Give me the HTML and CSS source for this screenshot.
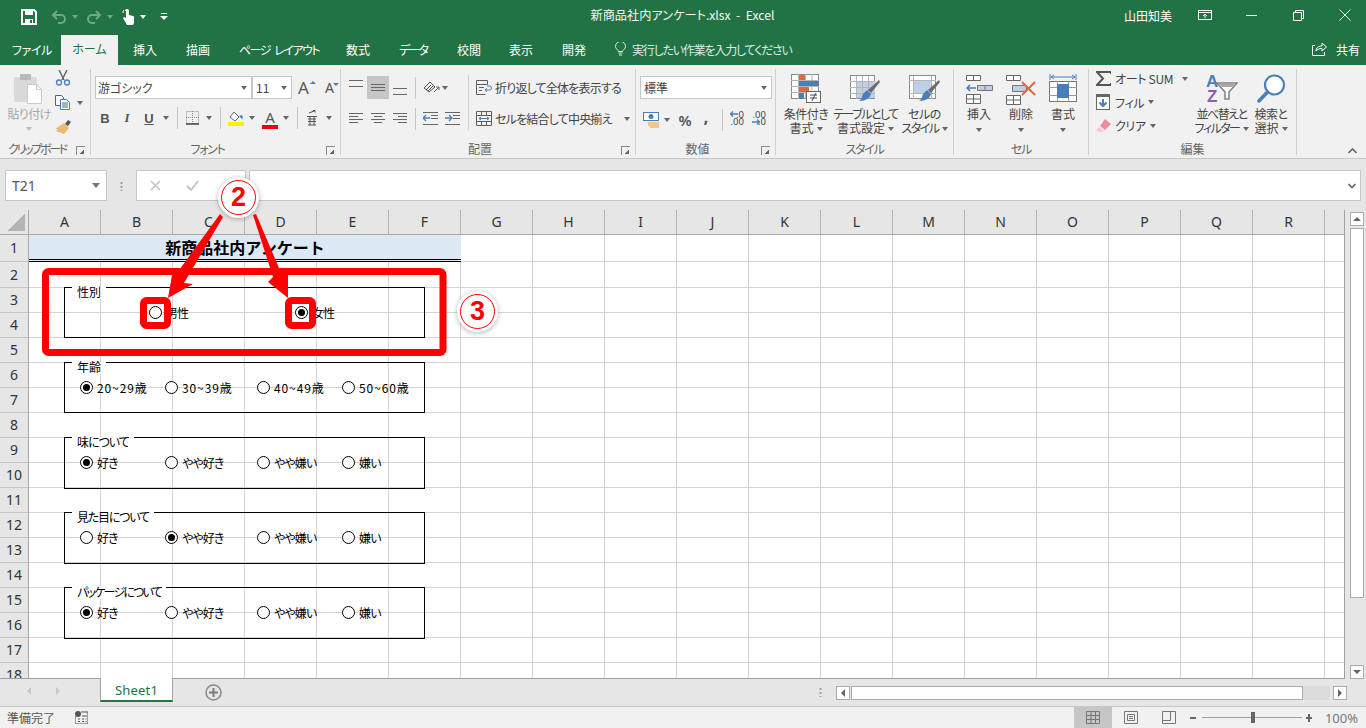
FILE: index.html
```html
<!DOCTYPE html>
<html lang="ja">
<head>
<meta charset="utf-8">
<title>新商品社内アンケート.xlsx - Excel</title>
<link rel="stylesheet" href="styles.css">
</head>
<body>
<div class="app">
  <header class="titlebar">
    <div class="qat">
      <svg class="q-save" width="16" height="16" viewBox="0 0 16 16"><path d="M1 1h12l2 2v12H1z" fill="none" stroke="#fff" stroke-width="2"/><rect x="4" y="1" width="8" height="5" fill="#fff"/><rect x="4" y="10" width="8" height="5" fill="#fff"/><rect x="9" y="11" width="2" height="3" fill="#217346"/></svg>
      <svg class="q-undo" width="16" height="14" viewBox="0 0 16 14"><path d="M6 1L2 5l4 4M2 5h8a4 4 0 0 1 0 8H7" fill="none" stroke="#6fa78b" stroke-width="2"/></svg>
      <span class="caret dimc"></span>
      <svg class="q-redo" width="16" height="14" viewBox="0 0 16 14"><path d="M10 1l4 4-4 4M14 5H6a4 4 0 0 0 0 8h3" fill="none" stroke="#6fa78b" stroke-width="2"/></svg>
      <span class="caret dimc"></span>
      <svg class="q-touch" width="13" height="16" viewBox="0 0 13 16"><path d="M3 2a2 2 0 0 1 4 0v4l4 1a1.500 1.500 0 0 1 1 2v5l-1 2H5L1 9l1-1 2 1V2z" fill="#fff"/><path d="M1 4a4 4 0 0 1 1-3" fill="none" stroke="#fff"/></svg>
      <span class="caret whitec"></span>
      <svg class="q-more" width="8" height="8" viewBox="0 0 8 8"><rect x="1" y="0" width="6" height="1" fill="#fff"/><path d="M0 3h8L4 7z" fill="#fff"/></svg>
    </div>
    <div class="doc-title">新商品社内アンケート.xlsx&nbsp; - &nbsp;Excel</div>
    <div class="win">
      <span class="user">山田知美</span>
      <svg class="w-ribbon" width="15" height="11" viewBox="0 0 15 11"><rect x=".5" y=".5" width="13" height="9" fill="none" stroke="#fff"/><path d="M0 2.500h14M7 8V4M5 6l2-2 2 2" fill="none" stroke="#fff"/></svg>
      <svg class="w-min" width="11" height="11" viewBox="0 0 11 11"><path d="M0 5.500h11" stroke="#fff"/></svg>
      <svg class="w-max" width="11" height="11" viewBox="0 0 11 11"><path d="M.5 2.500h8v8h-8zM2.500 2.500v-2h8v8h-2" fill="none" stroke="#fff"/></svg>
      <svg class="w-close" width="12" height="12" viewBox="0 0 12 12"><path d="M.5.500l11 11M11.500.500l-11 11" stroke="#fff"/></svg>
    </div>
  </header>

  <nav class="tabs">
    <span class="tab t-file">ファイル</span>
    <span class="tab t-home">ホーム</span>
    <span class="tab t-ins">挿入</span>
    <span class="tab t-draw">描画</span>
    <span class="tab t-page">ページ レイアウト</span>
    <span class="tab t-form">数式</span>
    <span class="tab t-data">データ</span>
    <span class="tab t-rev">校閲</span>
    <span class="tab t-view">表示</span>
    <span class="tab t-dev">開発</span>
    <svg class="bulb" width="11" height="14" viewBox="0 0 11 14"><path d="M3.500 9.500C3 7.500.5 7 .5 4.500a5 5 0 0 1 10 0C10.500 7 8 7.500 7.500 9.500zM3.500 11h4M4 13h3" fill="none" stroke="#dfeae4"/></svg>
    <span class="tell">実行したい作業を入力してください</span>
    <svg class="share" width="15" height="14" viewBox="0 0 15 14"><path d="M3 3.500H.5v10h12V10M4 9c0-3 2-5 6-5V1l4.500 4L10 9V6.500C7 6.500 5 7.500 4 9z" fill="none" stroke="#fff"/></svg>
    <span class="tab t-share">共有</span>
  </nav>

  <section class="ribbon">
    <!-- クリップボード -->
    <div class="group g-clip">
      <div class="body clip-body">
        <div class="tall paste">
          <svg class="ticon" width="32" height="32" viewBox="0 0 32 32"><rect x="1" y="4" width="23" height="25" rx="1" fill="#dcd9db"/><rect x="7" y="1" width="11" height="6" fill="#bdb9bb"/><path d="M14.500 11.500h9l5 5v14h-14z" fill="#fff" stroke="#c9c9c9"/><path d="M23.500 11.500v5h5" fill="none" stroke="#c9c9c9"/></svg>
          <span class="lbl dim">貼り付け</span>
          <span class="caret lightc"></span>
        </div>
        <div class="clip-small">
          <svg width="16" height="16" viewBox="0 0 16 16"><path d="M4 0l5 10M12 0L7 10" stroke="#666" stroke-width="1.500" fill="none"/><circle cx="4" cy="12.500" r="2.500" fill="none" stroke="#4a7eb8" stroke-width="1.300"/><circle cx="12" cy="12.500" r="2.500" fill="none" stroke="#4a7eb8" stroke-width="1.300"/></svg>
          <div class="clip-copy"><svg width="16" height="15" viewBox="0 0 16 15"><path d="M.5.500h6l2 2v8H.5z" fill="#fff" stroke="#5e5e5e"/><path d="M5.500 4.500h6l3 3v7h-9z" fill="#fff" stroke="#4a7eb8"/><path d="M7 8h6M7 10h6M7 12h6" stroke="#5e5e5e"/></svg><span class="caret"></span></div>
          <svg width="17" height="15" viewBox="0 0 17 15"><path d="M10 5l3-4 3 2-3 4z" fill="#555"/><path d="M9 4l5 5-5 6-8-3 2-2-3 0z" fill="#eab972"/></svg>
        </div>
      </div>
      <div class="glabel"><span class="gtext clip-text">クリップボード</span><span class="launch"></span></div>
    </div>

    <!-- フォント -->
    <div class="group g-font">
      <div class="body">
        <div class="font-row1">
          <div class="combo c-font"><span>游ゴシック</span><span class="caret"></span></div>
          <div class="combo c-size"><span>11</span><span class="caret"></span></div>
          <span class="fsz big">A<i class="up"></i></span>
          <span class="fsz small">A<i class="down"></i></span>
        </div>
        <div class="font-row2">
          <span class="cell fb">B</span>
          <span class="cell fi">I</span>
          <span class="cell fu">U</span>
          <span class="cell"><span class="caret"></span></span>
          <span class="cell"><span class="sep"></span></span>
          <span class="cell"><svg width="13" height="14" viewBox="0 0 13 14"><path d="M.5.500h12v12H.5z" fill="none" stroke="#8a8a8a" stroke-dasharray="1 1"/><path d="M6.500 0v13M0 6.500h13" stroke="#8a8a8a" stroke-dasharray="1 1"/><path d="M0 13h13" stroke="#444" stroke-width="1.500"/></svg></span>
          <span class="cell"><span class="caret"></span></span>
          <span class="cell"><span class="sep"></span></span>
          <span class="cell"><svg width="16" height="15" viewBox="0 0 16 15"><path d="M6 1l5 5-4 4-5-4z" fill="#fff" stroke="#666"/><path d="M11 5l3 3 1-1-1-3z" fill="#4a7eb8"/><rect y="11" width="16" height="4" fill="#ffef00"/></svg></span>
          <span class="cell"><span class="caret"></span></span>
          <span class="cell fcolor">A</span>
          <span class="cell"><span class="caret"></span></span>
          <span class="cell"><span class="sep"></span></span>
          <span class="cell"><svg width="10" height="16" viewBox="0 0 10 16"><path d="M2 3l5-2M6 .5h2v2" stroke="#444" fill="none"/><path d="M0 6.500h10M1 9h8M1 11.500h8M1 15h8M3 7v8M7 7v8" stroke="#555"/></svg></span>
          <span class="cell"><span class="caret"></span></span>
        </div>
      </div>
      <div class="glabel"><span class="gtext">フォント</span><span class="launch"></span></div>
    </div>

    <!-- 配置 -->
    <div class="group g-align">
      <div class="body align-body">
        <div class="align-left">
          <div class="align-row">
            <span class="cell al-t"><svg width="14" height="8" viewBox="0 0 14 8"><path d="M0 .500h14M0 6.500h14" stroke="#666"/></svg></span>
            <span class="cell al-on"><svg width="14" height="8" viewBox="0 0 14 8"><path d="M0 .500h14M0 3.500h14M0 6.500h14" stroke="#666"/></svg></span>
            <span class="cell al-b"><svg width="14" height="8" viewBox="0 0 14 8"><path d="M0 .500h14M0 6.500h14" stroke="#666"/></svg></span>
            <span class="cell"><span class="sep"></span></span>
            <span class="cell"><svg width="17" height="13" viewBox="0 0 17 13"><path d="M1 7l6-6 5 5-6 5zM3 9l5-5M5 10l5-5" fill="none" stroke="#555"/><path d="M11 11l5-5M16 9V6h-3" fill="none" stroke="#666"/></svg></span>
            <span class="cell"><span class="caret"></span></span>
          </div>
          <div class="align-row">
            <span class="cell"><svg width="14" height="12" viewBox="0 0 14 12"><path d="M0 .500h14M0 3.500h9M0 6.500h14M0 9.500h9" stroke="#666"/></svg></span>
            <span class="cell"><svg width="14" height="12" viewBox="0 0 14 12"><path d="M0 .500h14M3 3.500h8M0 6.500h14M3 9.500h8" stroke="#666"/></svg></span>
            <span class="cell"><svg width="14" height="12" viewBox="0 0 14 12"><path d="M0 .500h14M5 3.500h9M0 6.500h14M5 9.500h9" stroke="#666"/></svg></span>
            <span class="cell"><span class="sep"></span></span>
            <span class="cell ind"><svg width="15" height="13" viewBox="0 0 15 13"><path d="M0 .500h15M8 3.500h7M8 6.500h7M0 12.500h15" stroke="#666"/><path d="M0 6h7M3 3L0 6l3 3" fill="none" stroke="#4a7eb8" stroke-width="1.300"/></svg><svg width="15" height="13" viewBox="0 0 15 13"><path d="M0 .500h15M8 3.500h7M8 6.500h7M0 12.500h15" stroke="#666"/><path d="M0 6h7M4 3l3 3-3 3" fill="none" stroke="#4a7eb8" stroke-width="1.300"/></svg></span>
          </div>
        </div>
        <div class="align-right">
          <div class="wide-btn"><svg width="16" height="15" viewBox="0 0 16 15"><path d="M.5.500h11v4H.500zM.5 4.500v10h9M3 7.500h5M3 10.500h3" fill="none" stroke="#5e5e5e"/><path d="M9 10h4.500a1.500 1.500 0 0 0 0-4H11M11 8.500L9 10l2 1.500" fill="none" stroke="#4a7eb8"/></svg><span>折り返して全体を表示する</span></div>
          <div class="wide-btn"><svg width="16" height="15" viewBox="0 0 16 15"><path d="M.5.500h15v14H.500zM0 4.500h16M0 10.500h16M5.500.500v4M10.500.500v4M5.500 10.500v4M10.500 10.500v4" fill="none" stroke="#5e5e5e"/><path d="M3 7.500h10M5 6L3 7.500 5 9M11 6l2 1.500L11 9" fill="none" stroke="#4a7eb8"/></svg><span>セルを結合して中央揃え</span><span class="caret merge-caret"></span></div>
        </div>
      </div>
      <div class="glabel"><span class="gtext kj">配置</span><span class="launch"></span></div>
    </div>

    <!-- 数値 -->
    <div class="group g-num">
      <div class="body">
        <div class="combo c-num"><span>標準</span><span class="caret"></span></div>
        <div class="num-row">
          <span class="cell"><svg width="17" height="16" viewBox="0 0 17 16"><rect x=".5" y=".5" width="15" height="8" fill="#fff" stroke="#4a7eb8"/><circle cx="8" cy="4.500" r="2.500" fill="#4a7eb8"/><path d="M5 11h11M5 13h11M7 15h9" stroke="#eab972" stroke-width="1.500"/></svg></span>
          <span class="cell"><span class="caret"></span></span>
          <span class="cell pct">%</span>
          <span class="cell cma">,</span>
          <span class="cell"><span class="sep"></span></span>
          <span class="cell dec"><svg class="dec-arrow" width="8" height="6" viewBox="0 0 8 6"><path d="M8 3H1M3 .500L.500 3 3 5.500" fill="none" stroke="#4a7eb8" stroke-width="1.300"/></svg><span class="dig d1">.0</span><span class="dig d2">.00</span></span>
          <span class="cell dec inc"><svg class="dec-arrow a2" width="8" height="6" viewBox="0 0 8 6"><path d="M0 3h7M5 .500L7.500 3 5 5.500" fill="none" stroke="#4a7eb8" stroke-width="1.300"/></svg><span class="dig d1">.00</span><span class="dig d2">.0</span></span>
        </div>
      </div>
      <div class="glabel"><span class="gtext kj">数値</span><span class="launch"></span></div>
    </div>

    <!-- スタイル -->
    <div class="group g-style">
      <div class="body tall-row style-row">
        <div class="tall">
          <svg class="ticon" width="31" height="30" viewBox="0 0 31 30"><rect x=".5" y=".5" width="27" height="24" fill="#fff" stroke="#8a8a8a"/><path d="M7.500 0v25M14.500 0v25M21 0v25M0 6.500h28M0 12.500h28M0 18.500h28" stroke="#b5b5b5"/><rect x="8" y="1" width="6" height="5" fill="#dd6a42"/><rect x="8" y="7" width="20" height="5" fill="#4a7eb8"/><rect x="8" y="13" width="10" height="5" fill="#dd6a42"/><rect x="8" y="19" width="5" height="6" fill="#4a7eb8"/><rect x="15.500" y="17.500" width="14" height="11" fill="#fff" stroke="#666"/><path d="M19 21h7M19 24h7M25 19l-4 8" stroke="#444" fill="none"/></svg>
          <span class="lbl lt1">条件付き</span><span class="lbl">書式<span class="caret inl"></span></span>
        </div>
        <div class="tall">
          <svg class="ticon" width="31" height="30" viewBox="0 0 31 30"><rect x=".5" y="1.500" width="24" height="23" fill="#fff" stroke="#8a8a8a"/><rect x="6" y="7" width="19" height="17" fill="#bfd0e6"/><path d="M6.500 2v23M12.500 2v23M18.500 2v23M0 7.500h25M0 13.500h25M0 19.500h25" stroke="#b5b5b5"/><path d="M29 6l1 2-9 11-3-3z" fill="#6b6b6b"/><path d="M17 16l4 4c-1 4-5 7-12 7 3-2 3-4 4-7z" fill="#4a7eb8"/></svg>
          <span class="lbl lt2">テーブルとして</span><span class="lbl">書式設定<span class="caret inl"></span></span>
        </div>
        <div class="tall">
          <svg class="ticon" width="31" height="30" viewBox="0 0 31 30"><rect x=".5" y="1.500" width="26" height="23" fill="#fff" stroke="#8a8a8a"/><rect x="5" y="7" width="17" height="12" fill="#bfd0e6"/><path d="M0 6.500h27M0 19.500h27M4.500 2v23M22.500 2v23" stroke="#b5b5b5"/><path d="M30 6l1 2-9 11-3-3z" fill="#6b6b6b"/><path d="M18 16l4 4c-1 4-5 7-12 7 3-2 3-4 4-7z" fill="#4a7eb8"/></svg>
          <span class="lbl lt1">セルの</span><span class="lbl lt2">スタイル<span class="caret inl"></span></span>
        </div>
      </div>
      <div class="glabel"><span class="gtext">スタイル</span></div>
    </div>

    <!-- セル -->
    <div class="group g-cells">
      <div class="body tall-row cells-row">
        <div class="tall">
          <svg class="ticon" width="27" height="30" viewBox="0 0 27 30"><path d="M.5 1.500h14v5H.500zM7.500 1.500v5M.5 20.500h14v9H.500zM7.500 20.500v9M.5 25h14" fill="#fff" stroke="#666"/><path d="M1 14h9M4 11l-3 3 3 3" fill="none" stroke="#4a7eb8" stroke-width="1.500"/><path d="M11.500 11.500h15v5h-15zM19 11.500v5" fill="#bfd0e6" stroke="#777"/></svg>
          <span class="lbl">挿入</span><span class="caret lone"></span>
        </div>
        <div class="tall">
          <svg class="ticon" width="31" height="30" viewBox="0 0 31 30"><path d="M.5 1.500h14v5H.500zM7.500 1.500v5M.5 21.500h14v9H.500zM7.500 21.500v9M.5 26h14" fill="#fff" stroke="#666"/><path d="M6.500 11.500h14v6h-14z" fill="#bfd0e6" stroke="#777"/><path d="M16 8l13 13M29 8L16 21" stroke="#dd6a42" stroke-width="2"/></svg>
          <span class="lbl">削除</span><span class="caret lone"></span>
        </div>
        <div class="tall">
          <svg class="ticon" width="28" height="30" viewBox="0 0 28 30"><path d="M1 0v6M27 0v6M2 3h24M5 1L2 3l3 2M23 1l3 2-3 2" fill="none" stroke="#4a7eb8"/><rect x=".5" y="7.500" width="27" height="20" fill="#fff" stroke="#777"/><path d="M8.500 7.500v20M19.500 7.500v20M0 13.500h28M0 21.500h28" stroke="#9a9a9a"/><rect x="8" y="10" width="12" height="14" fill="#4a7eb8"/></svg>
          <span class="lbl">書式</span><span class="caret lone"></span>
        </div>
      </div>
      <div class="glabel"><span class="gtext">セル</span></div>
    </div>

    <!-- 編集 -->
    <div class="group g-edit">
      <div class="body edit-body">
        <div class="edit-list">
          <div class="edit-item e-sum"><svg width="15" height="15" viewBox="0 0 15 15"><path d="M15 3V1H1l6 6.500L1 14h14v-2" fill="none" stroke="#555" stroke-width="2"/></svg><span>オート SUM</span><span class="caret sumc"></span></div>
          <div class="edit-item e-fill"><svg width="15" height="17" viewBox="0 0 15 17"><rect x=".5" y=".5" width="13" height="15" fill="#fff" stroke="#666"/><rect width="14" height="3" fill="#666"/><path d="M7 5v7M3.500 8.500L7 12l3.500-3.500" fill="none" stroke="#4a7eb8" stroke-width="2"/></svg><span>フィル</span><span class="caret"></span></div>
          <div class="edit-item e-clear"><svg width="15" height="13" viewBox="0 0 15 13"><path d="M9 0l6 5-6 6-5-4z" fill="#ec8ba0"/><path d="M3 8l5 4-2 1H3L0 11z" fill="#f6c9d2"/></svg><span>クリア</span><span class="caret"></span></div>
        </div>
        <div class="tall">
          <svg class="ticon" width="32" height="30" viewBox="0 0 32 30"><text class="az a" x="0" y="13">A</text><text class="az z" x="1" y="28">Z</text><path d="M11 9h20l-8 9v7h-4v-7z" fill="#fff" stroke="#808080" stroke-width="1.500"/><path d="M13 10h16l-3 3H16z" fill="#a8a8a8"/></svg>
          <span class="lbl lt2">並べ替えと</span><span class="lbl lt2">フィルター<span class="caret inl"></span></span>
        </div>
        <div class="tall">
          <svg class="ticon" width="29" height="30" viewBox="0 0 29 30"><circle cx="17.500" cy="11" r="9.500" fill="#fff" stroke="#4a7eb8" stroke-width="2.200"/><path d="M10.500 18L2 27" stroke="#4a7eb8" stroke-width="3.500" stroke-linecap="round"/></svg>
          <span class="lbl lt1">検索と</span><span class="lbl">選択<span class="caret inl"></span></span>
        </div>
      </div>
      <div class="glabel"><span class="gtext kj">編集</span></div>
    </div>

    <div class="ribbon-end"><svg width="9" height="6" viewBox="0 0 9 6"><path d="M.5 5l4-4 4 4" fill="none" stroke="#666" stroke-width="1.600"/></svg></div>
  </section>

  <section class="fbar">
    <div class="namebox"><span>T21</span><span class="caret"></span></div>
    <div class="fdots"></div>
    <div class="fbtns">
      <svg width="11" height="11" viewBox="0 0 11 11"><path d="M1 1l9 9M10 1l-9 9" stroke="#c6c6c6" stroke-width="1.600"/></svg>
      <svg width="13" height="11" viewBox="0 0 13 11"><path d="M1 6l4 4 7-9" fill="none" stroke="#c6c6c6" stroke-width="2"/></svg>
    </div>
    <div class="finput"><svg width="8" height="6" viewBox="0 0 8 6"><path d="M.5 1L4 4.500 7.500 1" fill="none" stroke="#666" stroke-width="1.600"/></svg></div>
  </section>

  <section class="sheet">
    <div class="sheet-main">
      <div class="colheads">
        <div class="corner"><i></i></div>
        <span class="ch">A</span><span class="ch">B</span><span class="ch">C</span><span class="ch">D</span><span class="ch">E</span><span class="ch">F</span><span class="ch">G</span><span class="ch">H</span><span class="ch">I</span><span class="ch">J</span><span class="ch">K</span><span class="ch">L</span><span class="ch">M</span><span class="ch">N</span><span class="ch">O</span><span class="ch">P</span><span class="ch">Q</span><span class="ch">R</span><span class="ch last"></span>
      </div>
      <div class="sheet-body">
        <div class="rowheads">
          <span class="rh r1">1</span><span class="rh r2">2</span><span class="rh">3</span><span class="rh">4</span><span class="rh">5</span><span class="rh">6</span><span class="rh">7</span><span class="rh">8</span><span class="rh">9</span><span class="rh">10</span><span class="rh">11</span><span class="rh">12</span><span class="rh">13</span><span class="rh">14</span><span class="rh">15</span><span class="rh">16</span><span class="rh">17</span><span class="rh">18</span>
        </div>
        <div class="canvas">
          <div class="title-row"><div class="title-cell">新商品社内アンケート</div><div class="title-rest"></div></div>
          <div class="cells"></div>
          <div class="forms">
            <div class="gbox short">
              <span class="legend">性別</span>
              <div class="opts gender"><label class="opt"><i class="radio"></i>男性</label><label class="opt"><i class="radio on"></i>女性</label></div>
            </div>
            <div class="gbox short">
              <span class="legend">年齢</span>
              <div class="opts"><label class="opt num"><i class="radio on"></i>20~29歳</label><label class="opt num"><i class="radio"></i>30~39歳</label><label class="opt num"><i class="radio"></i>40~49歳</label><label class="opt num"><i class="radio"></i>50~60歳</label></div>
            </div>
            <div class="gbox">
              <span class="legend lg1">味について</span>
              <div class="opts"><label class="opt"><i class="radio on"></i>好き</label><label class="opt"><i class="radio"></i>やや好き</label><label class="opt"><i class="radio"></i>やや嫌い</label><label class="opt"><i class="radio"></i>嫌い</label></div>
            </div>
            <div class="gbox">
              <span class="legend lg2">見た目について</span>
              <div class="opts"><label class="opt"><i class="radio"></i>好き</label><label class="opt"><i class="radio on"></i>やや好き</label><label class="opt"><i class="radio"></i>やや嫌い</label><label class="opt"><i class="radio"></i>嫌い</label></div>
            </div>
            <div class="gbox">
              <span class="legend lg3">パッケージについて</span>
              <div class="opts"><label class="opt"><i class="radio on"></i>好き</label><label class="opt"><i class="radio"></i>やや好き</label><label class="opt"><i class="radio"></i>やや嫌い</label><label class="opt"><i class="radio"></i>嫌い</label></div>
            </div>
          </div>
        </div>
      </div>
    </div>
    <div class="vscroll">
      <span class="sbtn"><i class="tri-up"></i></span>
      <span class="vthumb"></span>
      <span class="sbtn vdown"><i class="tri-down"></i></span>
    </div>
  </section>

  <section class="tabbar">
    <div class="tabnav"><i class="tri-left"></i><i class="tri-right"></i></div>
    <div class="sheettab">Sheet1</div>
    <svg class="addsheet" width="17" height="17" viewBox="0 0 17 17"><circle cx="8.500" cy="8.500" r="7.500" fill="none" stroke="#8a8a8a" stroke-width="1.500"/><path d="M8.500 4v9M4 8.500h9" stroke="#7a7a7a" stroke-width="2"/></svg>
    <div class="tabdots"></div>
    <div class="hscroll">
      <span class="sbtn"><i class="tri-left dark"></i></span>
      <span class="hthumb"></span>
      <span class="htrack"></span>
      <span class="sbtn"><i class="tri-right dark"></i></span>
    </div>
  </section>

  <footer class="status">
    <span class="ready">準備完了</span>
    <svg class="macro" width="13" height="13" viewBox="0 0 13 13"><circle cx="3" cy="3" r="3" fill="#555"/><path d="M6 1h7v12H0V6h1" fill="none" stroke="#555"/><path d="M3 8h2M7 8h2M10.500 8h1M3 10.500h2M7 10.500h2M10.500 10.500h1M7 5h5" stroke="#555"/></svg>
    <div class="status-right">
      <span class="view on"><svg width="14" height="13" viewBox="0 0 14 13"><path d="M.5.500h13v12H.500zM5 .500v12M9.500.500v12M0 4.500h14M0 8.500h14" fill="none" stroke="#777"/></svg></span>
      <span class="view"><svg width="14" height="13" viewBox="0 0 14 13"><path d="M.5.500h13v12H.500z" fill="none" stroke="#777"/><path d="M3.500 3.500h7v6h-7zM5 5.500h4M5 7.500h4" fill="none" stroke="#777"/></svg></span>
      <span class="view"><svg width="14" height="13" viewBox="0 0 14 13"><path d="M.5.500h13v12H.500zM.5 9.500h8V.500" fill="none" stroke="#777"/></svg></span>
      <span class="zbtn minus"></span>
      <span class="slider"><i></i></span>
      <span class="zbtn plus"></span>
      <span class="zoomv">100%</span>
    </div>
  </footer>

  <div class="marks">
    <svg class="marks-svg" width="1366" height="728" viewBox="0 0 1366 728">
      <polygon points="220,214 177,273 172,275 168,298 193,284 184,283 223,217" fill="#ff0000"/>
      <polygon points="253,215 273,277 268,282 288,298 288,273 282,275 256,214" fill="#ff0000"/>
      <rect x="45.500" y="271.500" width="397.500" height="81" rx="3" fill="none" stroke="#ff0000" stroke-width="7"/>
      <rect x="143.500" y="300.500" width="24" height="25" rx="3" fill="none" stroke="#ff0000" stroke-width="7"/>
      <rect x="288.500" y="300.500" width="24" height="25" rx="3" fill="none" stroke="#ff0000" stroke-width="7"/>
    </svg>
    <span class="badge b2">2</span>
    <span class="badge b3">3</span>
  </div>
</div>
</body>
</html>
```
FILE: styles.css
```css
* { box-sizing: border-box; }
html, body { margin: 0; padding: 0; }
body { width: 1366px; height: 728px; overflow: hidden; background: #fff; font-family: "Noto Sans CJK JP", "Noto Sans", sans-serif; font-size: 12px; color: #444; font-feature-settings: "palt"; }
.app { position: relative; width: 1366px; height: 728px; display: flex; flex-direction: column; }
svg { display: block; flex: none; }
i { font-style: normal; }

.caret { display: inline-block; flex: none; width: 0; height: 0; border-left: 3.5px solid transparent; border-right: 3.5px solid transparent; border-top: 4px solid #666; }
.dimc { border-top-color: #6fa78b; }
.whitec { border-top-color: #fff; }
.lightc { border-top-color: #bdbdbd; }
.sep { display: block; width: 1px; height: 22px; background: #c6c6c6; }

/* title bar */
.titlebar { height: 35px; background: #217346; color: #fff; display: flex; align-items: center; position: relative; flex: none; padding-bottom: 5px; }
.qat { display: flex; align-items: center; padding: 3px 0 0 21px; width: 420px; }
.q-undo { margin-left: 14px; }
.qat .caret { margin-left: 5px; }
.q-redo { margin-left: 8px; }
.q-touch { margin-left: 9px; }
.q-more { margin-left: 14px; }
.doc-title { width: 525px; text-align: center; font-size: 12.200px; color: #f4f8f6; white-space: nowrap; }
.win { flex: 1; display: flex; align-items: center; }
.user { margin-left: 179px; font-size: 12px; }
.w-ribbon { margin-left: 26px; }
.w-min { margin-left: 33px; }
.w-max { margin-left: 36px; }
.w-close { margin-left: 35px; }

/* tabs */
.tabs { height: 30px; background: #217346; color: #fff; display: flex; align-items: center; flex: none; font-size: 12px; padding-bottom: 2px; }
.tab { display: block; white-space: nowrap; }
.t-file { margin-left: 12px; width: 49px; letter-spacing: -.4px; }
.t-home { background: #f1f1f1; color: #217346; width: 57px; height: 30px; line-height: 28px; text-align: center; margin-bottom: -2px; }
.t-ins { margin-left: 15px; width: 53px; }
.t-draw { width: 53px; }
.t-page { width: 107px; letter-spacing: -1.500px; word-spacing: 3px; }
.t-form { width: 53px; }
.t-data { width: 58px; letter-spacing: -1.800px; }
.t-rev { width: 52px; }
.t-view { width: 53px; }
.t-dev { width: 53px; }
.bulb { margin-right: 6px; }
.tell { width: 680px; color: #dfeae4; white-space: nowrap; letter-spacing: -1.200px; }
.share { margin-right: 9px; }
.t-share { font-size: 12px; }

/* ribbon */
.ribbon { height: 94px; background: #f1f1f1; border-bottom: 1px solid #c6c6c6; display: flex; padding-top: 4px; flex: none; }
.group { height: 86px; border-right: 1px solid #d0d0d0; display: flex; flex-direction: column; flex: none; }
.body { height: 72px; }
.glabel { height: 15px; display: flex; align-items: center; color: #666; padding-top: 2px; }
.gtext { flex: 1; text-align: center; white-space: nowrap; line-height: 14px; letter-spacing: -1.300px; }
.gtext.kj { letter-spacing: 0; }
.gtext.clip-text { letter-spacing: -2.300px; }
.launch { width: 16px; height: 14px; flex: none; position: relative; }
.launch::before { content: ""; position: absolute; left: 2px; top: 4px; width: 8px; height: 8px; border-left: 1px solid #8a8a8a; border-top: 1px solid #8a8a8a; }
.launch::after { content: ""; position: absolute; left: 6px; top: 8px; width: 4px; height: 4px; background: linear-gradient(135deg, transparent 50%, #666 50%); }
.cell { display: flex; align-items: center; justify-content: center; height: 100%; }
.lbl { display: block; line-height: 14px; white-space: nowrap; }
.lt1 { letter-spacing: -.5px; }
.lt2 { letter-spacing: -1.500px; }
.dim { color: #a6a6a6; letter-spacing: -.7px; }
.tall { display: flex; flex-direction: column; align-items: center; padding-top: 4px; min-width: 0; }
.ticon { height: 32px; margin-bottom: 2px; }
.caret.inl { margin-left: 3px; vertical-align: 2px; border-top-color: #666; }
.caret.lone { margin-top: 7px; }
.tall-row { display: grid; }

.g-clip { width: 91px; }
.clip-body { display: flex; }
.paste { width: 55px; padding-left: 3px; }
.paste .caret { margin-top: 6px; }
.clip-small { display: flex; flex-direction: column; gap: 9px; padding-top: 1px; }
.clip-copy { display: flex; align-items: center; gap: 6px; }

.g-font { width: 250px; }
.font-row1 { display: flex; align-items: center; margin: 7px 0 0 4px; height: 23px; }
.combo { height: 23px; background: #fff; border: 1px solid #c6c6c6; display: flex; align-items: center; justify-content: space-between; padding: 0 4px 0 2px; font-size: 12px; color: #444; }
.c-font { width: 157px; }
.c-size { width: 40px; padding-left: 3px; }
.fsz { display: block; position: relative; font-family: "Noto Sans", sans-serif; color: #555; }
.fsz i { position: absolute; width: 0; height: 0; border-left: 3px solid transparent; border-right: 3px solid transparent; }
.fsz .up { border-bottom: 3px solid #4a7eb8; right: -4px; top: 5px; }
.fsz .down { border-top: 3px solid #4a7eb8; right: -5px; top: 5px; }
.big { font-size: 17px; margin-left: 6px; width: 14px; }
.small { font-size: 14px; margin-left: 13px; }
.font-row2 { display: grid; grid-template-columns: 22px 22px 22px 12px 10px 20px 14px 8px 24px 8px 28px 4px 18px 12px 22px; margin: 8px 0 0 3px; height: 22px; }
.fb, .fi, .fu, .fcolor { font-family: "Liberation Sans", sans-serif; font-size: 13px; font-weight: bold; color: #555; }
.fi { font-style: italic; font-family: "Liberation Serif", serif; }
.fu { text-decoration: underline; }
.fcolor { font-size: 15px; font-weight: normal; font-family: "Noto Sans", sans-serif; background: linear-gradient(#e60012, #e60012) center 18px / 16px 4px no-repeat; padding-bottom: 2px; }

.g-align { width: 295px; }
.align-body { display: flex; padding-top: 6px; }
.align-left { width: 127px; padding: 1px 0 0 4px; }
.align-row { display: grid; grid-template-columns: 22px 22px 22px 8px 24px 4px; height: 23px; margin-bottom: 8px; }
.al-on { background: #c6c6c6; }
.al-t svg { margin-bottom: 8px; }
.al-b svg { margin-top: 8px; }
.ind { grid-column: span 2; gap: 7px; justify-content: flex-start; padding-left: 4px; width: 42px; }
.align-right { border-left: 1px solid #d0d0d0; height: 55px; padding-left: 7px; width: 167px; }
.wide-btn { display: flex; align-items: center; gap: 3px; height: 25px; margin-bottom: 6px; white-space: nowrap; color: #444; letter-spacing: -.8px; }
.merge-caret { margin-left: 9px; }

.g-num { width: 140px; }
.c-num { width: 132px; margin: 7px 0 0 4px; padding: 0 4px 0 3px; }
.num-row { display: grid; grid-template-columns: 22px 10px 26px 16px 16px 16px 26px; margin: 8px 0 0 4px; height: 22px; }
.pct { font-family: "Noto Sans", sans-serif; font-size: 15px; font-weight: 600; color: #555; }
.cma { font-family: "Noto Sans", sans-serif; font-size: 15px; font-weight: 800; color: #555; padding-bottom: 6px; }
.dec { position: relative; }
.dec-arrow { position: absolute; left: 0; top: 4px; }
.dec-arrow.a2 { top: 12px; left: 6px; }
.dig { position: absolute; right: 2px; font-family: "Noto Sans", sans-serif; font-size: 9.500px; line-height: 7px; color: #444; }
.d1 { top: 4px; }
.d2 { top: 11px; }
.inc .dig { right: 6px; }

.g-style { width: 178px; }
.style-row { grid-template-columns: 60px 59px 59px; }
.g-cells { width: 135px; }
.cells-row { grid-template-columns: 42px 42px 42px; padding-left: 4px; }
.g-edit { width: 208px; }
.edit-body { display: grid; grid-template-columns: 104px 57px 42px; }
.edit-list { margin-top: -2px; padding-left: 7px; display: flex; flex-direction: column; }
.edit-item { display: flex; align-items: center; height: 23.500px; white-space: nowrap; letter-spacing: -.3px; }
.edit-item svg { margin-right: 4px; }
.edit-item .caret { margin-left: 4px; }
.edit-item .sumc { margin-left: 9px; }
.ribbon-end { flex: 1; display: flex; justify-content: flex-end; align-items: flex-end; padding: 0 9px 4px 0; }

/* formula bar */
.fbar { height: 51px; background: #e6e6e6; display: flex; padding: 11px 5px 10px 5px; flex: none; }
.namebox { width: 102px; height: 31px; background: #fff; border: 1px solid #c6c6c6; display: flex; align-items: center; justify-content: space-between; padding: 0 6px; font-family: "Noto Sans", sans-serif; font-size: 14px; color: #555; }
.namebox .caret { border-left-width: 4px; border-right-width: 4px; border-top-width: 5px; border-top-color: #777; }
.fdots { width: 3px; height: 10px; margin: 11px 13px 0 13px; background: radial-gradient(circle at center, #999 1px, transparent 1.2px) 0 0 / 3px 4px; }
.fbtns { width: 110px; height: 31px; background: #fff; border: 1px solid #c6c6c6; display: flex; align-items: center; padding-left: 13px; gap: 25px; }
.finput { flex: 1; height: 31px; margin-left: 3px; background: #fff; border: 1px solid #c6c6c6; display: flex; align-items: center; justify-content: flex-end; padding-right: 4px; }

/* sheet */
.sheet { height: 469px; display: flex; flex: none; background: #e6e6e6; }
.sheet-main { width: 1345px; border-right: 1px solid #a0a0a0; border-bottom: 1px solid #a0a0a0; display: flex; flex-direction: column; }
.colheads { height: 25px; display: flex; background: #e6e6e6; border-bottom: 1px solid #a8a8a8; flex: none; font-family: "Noto Sans", sans-serif; }
.corner { width: 29px; border-right: 1px solid #a8a8a8; position: relative; }
.corner i { position: absolute; left: 8px; top: 4px; width: 17px; height: 17px; background: linear-gradient(135deg, transparent 50%, #b4b4b4 50%); }
.ch { width: 72px; border-right: 1px solid #b4b4b4; text-align: center; font-size: 14px; line-height: 24px; color: #333; }
.ch.last { flex: 1; width: auto; border-right: 0; }
.sheet-body { flex: 1; display: flex; min-height: 0; }
.rowheads { width: 29px; background: #e6e6e6; border-right: 1px solid #a8a8a8; overflow: hidden; font-family: "Noto Sans", sans-serif; flex: none; }
.rh { display: block; height: 25px; border-bottom: 1px solid #c6c6c6; text-align: center; font-size: 14px; line-height: 24px; color: #333; }
.r1 { height: 27px; line-height: 26px; }
.r2 { height: 26px; line-height: 25px; }
.canvas { flex: 1; position: relative; overflow: hidden; background: #fff linear-gradient(to right, transparent 71px, #d4d4d4 71px) 0 0 / 72px 100% repeat-x; color: #000; }
.title-row { display: flex; height: 28px; }
.title-cell { width: 432px; height: 27px; background: #dce9f5; border-bottom: 3px double #000; text-align: center; font-size: 16px; font-weight: bold; line-height: 25px; color: #000; font-feature-settings: normal; }
.title-rest { flex: 1; height: 27px; border-bottom: 1px solid #d4d4d4; }
.cells { height: 416px; background: linear-gradient(to bottom, transparent 24px, #d4d4d4 24px) 0 0 / 100% 25px repeat-y; }
.forms { position: absolute; left: 35px; top: 52px; width: 361px; display: grid; grid-auto-rows: 75px; }
.gbox { position: relative; height: 52px; border: 1px solid #000; }
.gbox.short { height: 51px; }
.legend { position: absolute; left: 7px; top: -1px; height: 12px; padding: 0 5px; background: #fff; font-size: 12px; line-height: 10px; white-space: nowrap; color: #000; }
.lg1 { letter-spacing: -1px; }
.lg2 { letter-spacing: -1.200px; }
.lg3 { letter-spacing: -1.800px; }
.opts { height: 100%; display: grid; grid-template-columns: 85px 92px 85px 70px; align-items: center; padding: 0 0 2px 15px; }
.short .opts { padding-bottom: 0; }
.opts.gender { grid-template-columns: 146px 100px; padding-left: 84px; }
.opt { display: flex; align-items: center; gap: 4px; white-space: nowrap; font-size: 12px; letter-spacing: -.9px; }
.opt.num { letter-spacing: .9px; }
.radio { display: block; width: 13px; height: 13px; border: 1px solid #000; border-radius: 50%; background: #fff; position: relative; flex: none; }
.radio.on::after { content: ""; position: absolute; left: 2px; top: 2px; width: 7px; height: 7px; border-radius: 50%; background: #000; }

/* scroll bars */
.vscroll { flex: 1; display: flex; flex-direction: column; align-items: center; padding: 2px 0 0 3px; width: 21px; background: #e6e6e6; }
.sbtn { display: flex; align-items: center; justify-content: center; width: 14px; height: 14px; background: #fff; border: 1px solid #ababab; flex: none; }
.vthumb { display: block; width: 14px; height: 370px; margin-top: 2px; background: #fff; border: 1px solid #ababab; }
.vdown { margin-top: auto; }
.tri-up, .tri-down { width: 0; height: 0; border-left: 4px solid transparent; border-right: 4px solid transparent; }
.tri-up { border-bottom: 4px solid #666; }
.tri-down { border-top: 4px solid #666; }
.tri-left, .tri-right { display: block; width: 0; height: 0; border-top: 4px solid transparent; border-bottom: 4px solid transparent; }
.tri-left { border-right: 4px solid #c6c6c6; }
.tri-right { border-left: 4px solid #c6c6c6; }
.tri-left.dark { border-right-color: #666; }
.tri-right.dark { border-left-color: #666; }

/* tab bar */
.tabbar { height: 27px; background: #e6e6e6; display: flex; align-items: flex-start; flex: none; }
.tabnav { width: 100px; height: 24px; display: flex; align-items: center; padding-left: 27px; gap: 25px; }
.sheettab { width: 73px; height: 24px; background: #fff; border-left: 1px solid #a0a0a0; border-right: 1px solid #a0a0a0; border-bottom: 2px solid #217346; margin-top: -1px; color: #217346; font-family: "Noto Sans", sans-serif; font-size: 13px; line-height: 25px; text-align: center; letter-spacing: .2px; position: relative; }
.addsheet { margin: 5px 0 0 32px; }
.tabdots { width: 3px; height: 10px; margin: 8px 0 0 597px; background: radial-gradient(circle at center, #999 1px, transparent 1.2px) 0 0 / 3px 4px; }
.hscroll { display: flex; align-items: center; margin: 7px 0 0 14px; }
.hthumb { display: block; width: 452px; height: 14px; margin-left: 1px; background: #fff; border: 1px solid #ababab; }
.htrack { display: block; width: 27px; height: 14px; background: #dcdcdc; margin-right: 3px; }

/* status */
.status { flex: 1; background: #f1f1f1; border-top: 1px solid #c6c6c6; display: flex; align-items: center; color: #555; font-size: 12px; }
.ready { margin-left: 7px; }
.macro { margin-left: 20px; }
.status-right { margin-left: auto; display: flex; align-items: center; height: 100%; }
.view { width: 38px; height: 100%; display: flex; align-items: center; justify-content: center; }
.view.on { background: #c6c6c6; }
.zbtn { display: block; position: relative; width: 8px; height: 8px; }
.zbtn::before { content: ""; position: absolute; left: 1px; top: 3px; width: 6px; height: 2px; background: #666; }
.minus { margin-left: 1px; }
.plus::after { content: ""; position: absolute; left: 3px; top: 0; width: 2px; height: 8px; background: #666; }
.plus { margin-left: 3px; }
.slider { display: block; position: relative; width: 100px; height: 1px; background: #a0a0a0; margin-left: 5px; }
.slider i { position: absolute; left: 49px; top: -5px; width: 4px; height: 11px; background: #666; }
.zoomv { margin: 0 8px 0 12px; font-family: "Noto Sans", sans-serif; font-size: 13px; color: #777; }

/* annotations */
.marks { position: absolute; left: 0; top: 0; width: 1366px; height: 728px; pointer-events: none; }
.marks-svg { position: absolute; left: 0; top: 0; }
.badge { position: absolute; width: 41px; height: 41px; border-radius: 50%; background: #fff; box-shadow: 0 1px 5px rgba(0, 0, 0, .3); color: #ff0000; font-family: "Liberation Sans", sans-serif; font-weight: bold; font-size: 27px; line-height: 41px; text-align: center; font-feature-settings: normal; }
.badge::after { content: ""; position: absolute; inset: 3px; border: 1.500px solid #ff0000; border-radius: 50%; }
.b2 { left: 218px; top: 177px; }
.b3 { left: 457px; top: 291px; }
.az { font-family: "Liberation Sans", sans-serif; font-weight: bold; font-size: 17px; }
.az.a { fill: #4a7eb8; }
.az.z { fill: #8a5fb0; }
```
